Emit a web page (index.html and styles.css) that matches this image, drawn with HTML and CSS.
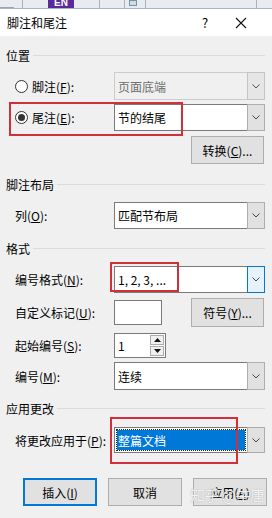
FILE: index.html
```html
<!doctype html>
<html>
<head>
<meta charset="utf-8">
<title>脚注和尾注</title>
<link rel="stylesheet" href="styles.css">
</head>
<body>
	<div class="strip">
		<span class="seg s1"></span>
		<span class="seg s2"></span>
		<span class="lang">EN</span>
		<span class="seg s3"></span>
		<span class="seg s4"></span>
		<span class="mini"></span>
		<span class="seg s5"></span>
		<span class="seg s6"></span>
	</div>

	<div class="titlebar">
		<span class="title">脚注和尾注</span>
		<span class="help">?</span>
		<span class="close">
			<svg width="12" height="12" viewBox="0 0 12 12"><path d="M1 1 L11 11 M11 1 L1 11" stroke="#111" stroke-width="1.1" fill="none"/></svg>
		</span>
	</div>

	<div class="dlg">
		<div class="grp grp-pos"><span>位置</span></div>

		<div class="row row-foot">
			<label class="radio"><i class="circle"></i>脚注(<u>F</u>):</label>
			<div class="combo disabled">
				<span class="val">页面底端</span>
				<span class="arrow"><svg width="8" height="5" viewBox="0 0 8 5"><path d="M0.5 0.5 L4 4 L7.5 0.5" stroke="#555" fill="none"/></svg></span>
			</div>
		</div>

		<div class="row row-end">
			<label class="radio"><i class="circle on"></i>尾注(<u>E</u>):</label>
			<div class="combo">
				<span class="val">节的结尾</span>
				<span class="arrow"><svg width="8" height="5" viewBox="0 0 8 5"><path d="M0.5 0.5 L4 4 L7.5 0.5" stroke="#444" fill="none"/></svg></span>
			</div>
			<div class="mark mark-a"></div>
		</div>

		<div class="row row-btn">
			<div class="btn">转换(<u>C</u>)...</div>
		</div>

		<div class="grp grp-layout"><span>脚注布局</span></div>

		<div class="row row-col">
			<label class="lbl">列(<u>O</u>):</label>
			<div class="combo">
				<span class="val">匹配节布局</span>
				<span class="arrow"><svg width="8" height="5" viewBox="0 0 8 5"><path d="M0.5 0.5 L4 4 L7.5 0.5" stroke="#444" fill="none"/></svg></span>
			</div>
		</div>

		<div class="grp grp-fmt"><span>格式</span></div>

		<div class="row row-num">
			<label class="lbl">编号格式(<u>N</u>):</label>
			<div class="combo">
				<span class="val">1, 2, 3, ...</span>
				<span class="arrow hot"><svg width="8" height="5" viewBox="0 0 8 5"><path d="M0.5 0.5 L4 4 L7.5 0.5" stroke="#444" fill="none"/></svg></span>
			</div>
			<div class="mark mark-b"></div>
		</div>

		<div class="row row-custom">
			<label class="lbl">自定义标记(<u>U</u>):</label>
			<div class="field small"></div>
			<div class="btn">符号(<u>Y</u>)...</div>
		</div>

		<div class="row row-start">
			<label class="lbl">起始编号(<u>S</u>):</label>
			<div class="spin">
				<span class="spin-val">1</span>
				<span class="spin-btns">
					<span class="up"><svg width="7" height="4" viewBox="0 0 7 4"><path d="M0 4 L3.5 0 L7 4 Z" fill="#111"/></svg></span>
					<span class="down"><svg width="7" height="4" viewBox="0 0 7 4"><path d="M0 0 L3.5 4 L7 0 Z" fill="#111"/></svg></span>
				</span>
			</div>
		</div>

		<div class="row row-mode">
			<label class="lbl">编号(<u>M</u>):</label>
			<div class="combo">
				<span class="val">连续</span>
				<span class="arrow"><svg width="8" height="5" viewBox="0 0 8 5"><path d="M0.5 0.5 L4 4 L7.5 0.5" stroke="#444" fill="none"/></svg></span>
			</div>
		</div>

		<div class="grp grp-apply"><span>应用更改</span></div>

		<div class="row row-apply">
			<label class="lbl">将更改应用于(<u>P</u>):</label>
			<div class="combo">
				<span class="val sel"><em>整篇文档</em></span>
				<span class="arrow"><svg width="8" height="5" viewBox="0 0 8 5"><path d="M0.5 0.5 L4 4 L7.5 0.5" stroke="#444" fill="none"/></svg></span>
			</div>
			<div class="mark mark-c"></div>
		</div>

		<div class="actions">
			<div class="btn main">插入(<u>I</u>)</div>
			<div class="btn">取消</div>
			<div class="btn">应用(<u>A</u>)</div>
			<span class="wm">知乎 @牛唐</span>
		</div>
	</div>
</body>
</html>
```

FILE: styles.css
```css
*{ margin:0; padding:0; box-sizing:border-box;}
body{
	width:272px;
	height:518px;
	overflow:hidden;
	background:#f0f0f0;
	font-family:"Noto Sans CJK SC","Microsoft YaHei",sans-serif;
	font-size:12px;
	color:#000;
}
u{ text-decoration:underline; text-underline-offset:1px;}

/* 上面露出的一条任务栏 */
.strip{
	height:9px;
	background:#e8ecf1;
	border-bottom:1px solid #9fb6cc;
	display:flex;
	position:relative;
}
.seg{ height:8px; border-right:1px solid #a9b3bd;}
.s1{ width:14px; border-right:none; border-bottom:1px solid #9aa4ad;}
.s2{ width:9px;}
.lang{
	width:26px;
	margin-left:25px;
	background:#5b2a9a;
	color:#fff;
	font:bold 10px/6px "Liberation Sans",sans-serif;
	text-align:center;
	overflow:hidden;
	height:8px;
}
.s3{ width:26px;}
.s4{ width:25px;}
.mini{ width:8px; height:6px; margin-left:4px; border:1px solid #7c8fa3; background:#cfdbe7;}
.s5{ width:9px;}
.s6{ width:111px;}

/* 标题栏 */
.titlebar{
	height:27px;
	background:#fff;
	display:flex;
	align-items:center;
	padding-left:7px;
}
.title{ flex:1; }
.help{ width:30px; font-size:13px; margin-right:2px;}
.close{ width:38px; display:flex; align-items:center; padding-left:1px;}

/* 主体 */
.dlg{ position:relative; }
.grp{
	display:flex;
	align-items:center;
	height:16px;
	padding:0 7px 0 6px;
}
.grp:after{
	content:'';
	flex:1;
	height:1px;
	background:#dcdcdc;
	margin-left:3px;
}
.grp-pos{ margin-top:11px;}
.grp-layout{ margin-top:12px;}
.grp-fmt{ margin-top:11px;}
.grp-apply{ margin-top:10px;}

.row{
	position:relative;
	display:flex;
	align-items:center;
	padding:0 7px 0 15px;
}
.lbl,.radio{
	width:99px;
	flex:none;
	display:flex;
	align-items:center;
}
.circle{
	width:13px;
	height:13px;
	border:1px solid #333;
	border-radius:50%;
	background:#fff;
	margin-right:4px;
	position:relative;
}
.circle.on:after{
	content:'';
	position:absolute;
	left:2px; top:2px;
	width:7px; height:7px;
	border-radius:50%;
	background:#333;
}

.combo{
	flex:1;
	height:100%;
	display:flex;
	border:1px solid #7a7a7a;
	background:#fff;
}
.combo .val{
	flex:1;
	display:flex;
	align-items:center;
	padding-left:3px;
}
.combo .arrow{
	width:18px;
	display:flex;
	align-items:center;
	justify-content:center;
	background:#e1e1e1;
	margin:-1px -1px -1px 0;
	border:1px solid #adadad;
}
.combo .arrow.hot{
	background:#e5f1fb;
	border-color:#0078d7;
}
.combo.disabled{
	background:#f0f0f0;
	border-color:#ccc;
	color:#6d6d6d;
}
.combo.disabled .arrow{ background:#e6e6e6; border-color:#c4c4c4;}

.val.sel{ padding:2px; }
.val.sel em{
	font-style:normal;
	flex:1;
	height:100%;
	display:flex;
	align-items:center;
	padding-left:1px;
	background:#0078d7;
	color:#fff;
	outline:1px dotted #222;
}

.row-foot{ margin-top:9px; height:28px;}
.row-end{ margin-top:4px; height:27px;}
.row-btn{ margin-top:5px; height:28px; justify-content:flex-end; padding-right:8px;}
.row-col{ margin-top:10px; height:27px;}
.row-num{ margin-top:10px; height:27px;}
.row-custom{ margin-top:5px; height:29px;}
.row-start{ margin-top:6px; height:25px;}
.row-mode{ margin-top:4px; height:28px;}
.row-apply{ margin-top:11px; height:26px;}

.btn{
	width:73px;
	height:28px;
	background:#e1e1e1;
	border:1px solid #adadad;
	display:flex;
	align-items:center;
	justify-content:center;
}
.row-custom .btn{ height:29px; margin-left:29px;}

.field.small{
	width:48px;
	height:25px;
	background:#fff;
	border:1px solid #7a7a7a;
}

.spin{
	width:52px;
	height:100%;
	display:flex;
	background:#fff;
	border:1px solid #7a7a7a;
}
.spin-val{ flex:1; display:flex; align-items:center; padding-left:3px;}
.spin-btns{
	width:15px;
	display:flex;
	flex-direction:column;
	padding:1px 1px 1px 0;
	gap:1px;
}
.spin-btns span{
	flex:1;
	display:flex;
	align-items:center;
	justify-content:center;
	background:#f0f0f0;
	border:1px solid #adadad;
}

/* 红色标注框 */
.mark{
	position:absolute;
	border:2px solid #d0303c;
	pointer-events:none;
}
.mark-a{ left:9px; top:-2px; width:174px; height:34px;}
.mark-b{ left:110px; top:-4px; width:69px; height:30px;}
.mark-c{ left:110px; top:-10px; width:128px; height:47px;}

.actions{
	position:relative;
	display:flex;
	margin-top:25px;
	padding-left:23px;
	gap:11px;
}
.actions .btn{ width:74px;}
.actions .btn.main{ border:2px solid #0078d7;}

/* 水印 */
.wm{
	position:absolute;
	left:190px;
	top:6px;
	font-size:15px;
	color:rgba(255,255,255,0.9);
	text-shadow:0 0 1px rgba(120,120,120,0.7);
	letter-spacing:-0.5px;
	white-space:nowrap;
}
```
